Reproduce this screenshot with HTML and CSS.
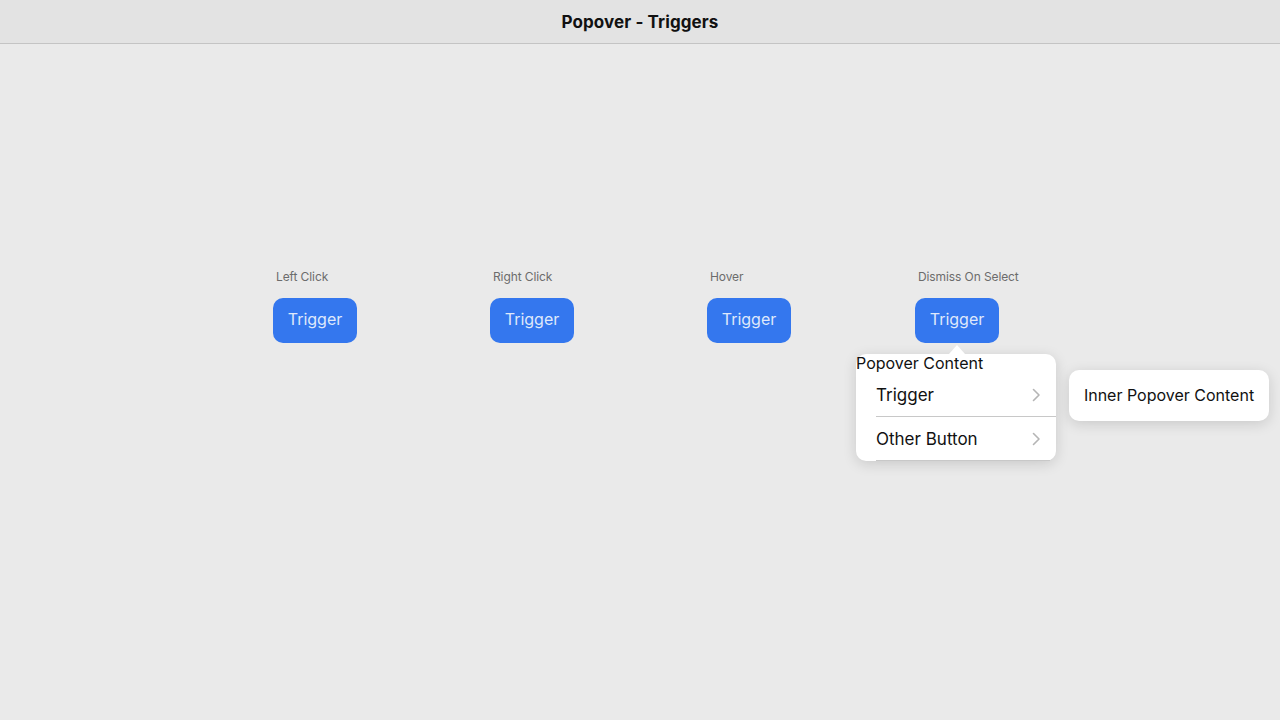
FILE: index.html
```html
<!DOCTYPE html>
<html>
<head>
<meta charset="utf-8">
<link rel="stylesheet" href="styles.css">
</head>
<body>
<header class="titlebar">Popover - Triggers</header>
<main class="stage">
  <div class="row">
    <div class="demo">
      <div class="label">Left Click</div>
      <button class="trigger">Trigger</button>
    </div>
    <div class="demo">
      <div class="label">Right Click</div>
      <button class="trigger">Trigger</button>
    </div>
    <div class="demo">
      <div class="label">Hover</div>
      <button class="trigger">Trigger</button>
    </div>
    <div class="demo demo-last">
      <div class="label">Dismiss On Select</div>
      <button class="trigger">Trigger</button>
      <div class="popover">
        <div class="arrow"></div>
        <div class="pop-title">Popover Content</div>
        <div class="item">
          <span>Trigger</span>
          <svg class="chev" width="9" height="14" viewBox="0 0 9 14"><path d="M1.5 1.5 L7 7 L1.5 12.5" fill="none" stroke="#b5b5b5" stroke-width="1.6" stroke-linecap="round" stroke-linejoin="round"/></svg>
        </div>
        <div class="item">
          <span>Other Button</span>
          <svg class="chev" width="9" height="14" viewBox="0 0 9 14"><path d="M1.5 1.5 L7 7 L1.5 12.5" fill="none" stroke="#b5b5b5" stroke-width="1.6" stroke-linecap="round" stroke-linejoin="round"/></svg>
        </div>
      </div>
      <div class="inner-popover">Inner Popover Content</div>
    </div>
  </div>
</main>
</body>
</html>
```
FILE: styles.css
```css
html, body {
  margin: 0;
  padding: 0;
  height: 100%;
}
body {
  background: #eaeaea;
  font-family: Inter, "Noto Sans", sans-serif;
  color: #111;
}
.titlebar {
  height: 43px;
  border-bottom: 1px solid #c4c4c4;
  background: #e3e3e3;
  display: flex;
  align-items: center;
  justify-content: center;
  font-weight: 700;
  font-size: 17px;
  letter-spacing: 0.1px;
  color: #111;
}
.stage {
  padding-top: 225px;
}
.row {
  display: flex;
  padding-left: 273px;
  gap: 133px;
}
.demo {
  display: flex;
  flex-direction: column;
  align-items: flex-start;
  position: relative;
}
.demo-last {
  margin-left: -9px;
}
.label {
  font-size: 12px;
  color: #6c6c6c;
  padding-left: 3px;
  height: 15px;
  line-height: 15px;
  margin-bottom: 14px;
  letter-spacing: -0.1px;
}
.trigger {
  width: 84px;
  height: 45px;
  border: none;
  border-radius: 10px;
  background: #3477ee;
  color: #dfe8fb;
  font-family: Inter, "Noto Sans", sans-serif;
  font-size: 16px;
  padding: 0 0 3px 0;
  margin: 0;
}
.popover {
  position: absolute;
  left: -59px;
  top: 85px;
  width: 200px;
  background: #fff;
  border-radius: 10px;
  box-shadow: 0 3px 14px rgba(0,0,0,0.14);
}
.arrow {
  position: absolute;
  top: -9px;
  left: 93px;
  width: 0;
  height: 0;
  border-left: 8px solid transparent;
  border-right: 8px solid transparent;
  border-bottom: 9px solid #fff;
}
.pop-title {
  font-size: 16px;
  line-height: 19px;
  color: #111;
}
.item {
  margin-left: 20px;
  height: 43px;
  border-bottom: 1px solid #c8c8c8;
  display: flex;
  align-items: center;
  justify-content: space-between;
  padding-right: 15px;
  font-size: 17px;
  color: #111;
}
.item:last-child {
  margin-right: 6px;
  padding-right: 9px;
}
.chev {
  display: block;
}
.inner-popover {
  position: absolute;
  left: 154px;
  top: 101px;
  width: 200px;
  box-sizing: border-box;
  height: 51px;
  background: #fff;
  border-radius: 10px;
  box-shadow: 0 3px 14px rgba(0,0,0,0.14);
  font-size: 16px;
  color: #111;
  display: flex;
  align-items: center;
  justify-content: center;
  padding-bottom: 2px;
}
```
